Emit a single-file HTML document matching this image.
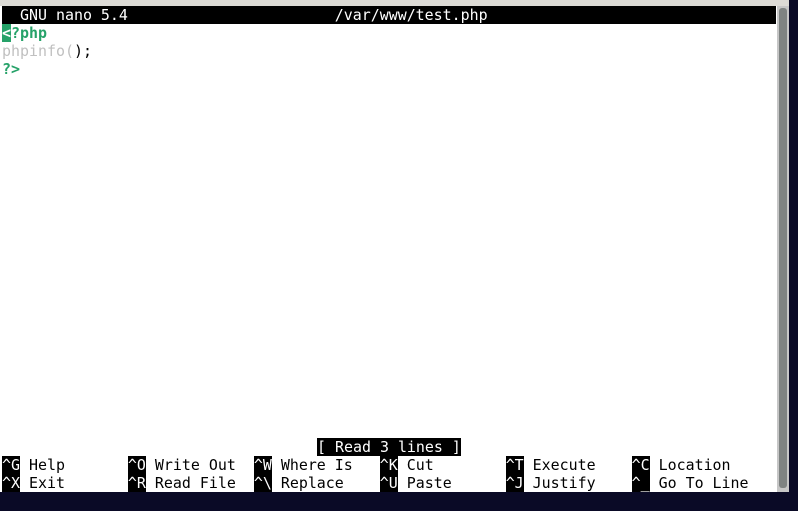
<!DOCTYPE html><html><head><style>
body{margin:0;width:798px;height:511px;background:#0a0a26;position:relative;overflow:hidden;font-family:"DejaVu Sans Mono","Liberation Mono",monospace;font-size:14.95px;}
#top{position:absolute;left:0;top:0;width:789px;height:6px;background:#dcdad5}
#term{position:absolute;left:0;top:6px;width:777px;height:486px;background:#fff}
#sb{position:absolute;left:777px;top:6px;width:12px;height:486px;background:#c6c6c6}
#th{position:absolute;left:779px;top:8px;width:8px;height:480px;background:#7f8382;border-radius:3px}
.r{position:absolute;left:2px;height:18px;line-height:18px;white-space:pre;color:#000}
.k{background:#000;color:#fff}
.g{color:#26a269;font-weight:bold}
</style></head><body>
<div id="top"></div><div id="term"></div><div id="sb"></div><div id="th"></div>
<div class="r k" style="top:6px;width:774px;overflow:hidden">  GNU nano 5.4                       /var/www/test.php                                    </div>
<div class="r" style="top:24px"><span class="g" style="background:#26a269;color:#fff">&lt;</span><span class="g">?php</span></div>
<div class="r" style="top:42px"><span style="color:#c0c0c0">phpinfo(</span>);</div>
<div class="r" style="top:60px"><span class="g">?&gt;</span></div>
<div class="r" style="top:438px;left:317px"><span class="k">[ Read 3 lines ]</span></div>
<div class="r" style="top:456px"><span class="k">^G</span> Help       <span class="k">^O</span> Write Out  <span class="k">^W</span> Where Is   <span class="k">^K</span> Cut        <span class="k">^T</span> Execute    <span class="k">^C</span> Location</div>
<div class="r" style="top:474px"><span class="k">^X</span> Exit       <span class="k">^R</span> Read File  <span class="k">^\</span> Replace    <span class="k">^U</span> Paste      <span class="k">^J</span> Justify    <span class="k">^_</span> Go To Line</div>
</body></html>
